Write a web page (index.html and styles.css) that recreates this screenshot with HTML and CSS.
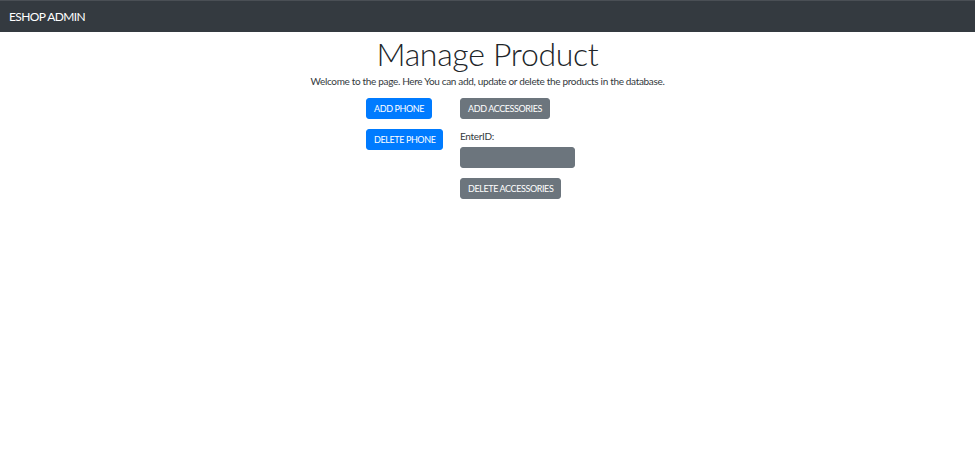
FILE: index.html
```html
<!DOCTYPE html>
<html>
<head>
<meta charset="utf-8">
<link rel="stylesheet" href="styles.css">
</head>
<body>
<nav class="navbar"><span class="brand">ESHOP ADMIN</span></nav>
<main class="main">
  <h1 class="title">Manage Product</h1>
  <p class="lead">Welcome to the page. Here You can add, update or delete the products in the database.</p>
  <div class="row">
    <div class="col col-left">
      <button class="btn btn-primary">ADD PHONE</button>
      <button class="btn btn-primary">DELETE PHONE</button>
    </div>
    <div class="col col-right">
      <button class="btn btn-secondary">ADD ACCESSORIES</button>
      <label class="label">EnterID:</label>
      <input class="input" type="text">
      <button class="btn btn-secondary btn-last">DELETE ACCESSORIES</button>
    </div>
  </div>
</main>
</body>
</html>
```
FILE: styles.css
```css
* { box-sizing: border-box; }
body {
  margin: 0;
  font-family: Lato, "Open Sans", sans-serif;
  color: #212529;
  background: #fff;
}
.navbar {
  height: 32px;
  background: #343a40;
  border-top: 1px solid #4a4f55;
  display: flex;
  align-items: center;
  padding-left: 9px;
}
.brand {
  color: #fff;
  font-size: 12px;
  letter-spacing: -0.6px;
}
.main {
  display: flex;
  flex-direction: column;
  align-items: center;
}
.title {
  margin: 2px 0 0;
  font-weight: 300;
  font-size: 32px;
  line-height: 40px;
  letter-spacing: -0.3px;
  color: #212529;
}
.lead {
  margin: 0 0 10px;
  font-size: 10px;
  line-height: 14px;
  letter-spacing: -0.33px;
  color: #343a40;
}
.row {
  display: flex;
}
.col {
  display: flex;
  flex-direction: column;
  align-items: flex-start;
}
.col-left { width: 94px; gap: 10px; }
.col-right { width: 149px; }
.btn {
  border: 1px solid transparent;
  border-radius: 3px;
  color: #fff;
  font-family: inherit;
  font-size: 9px;
  letter-spacing: -0.4px;
  height: 21px;
  padding: 0 7px;
  line-height: 19px;
}
.btn-primary { background: #007bff; border-color: #007bff; }
.btn-secondary { background: #6c757d; border-color: #6c757d; }
.label {
  margin-top: 10px;
  font-size: 10px;
  letter-spacing: -0.3px;
  line-height: 14px;
  color: #343a40;
}
.input {
  margin-top: 4px;
  width: 115px;
  height: 21px;
  background: #6c757d;
  border: 1px solid #6c757d;
  border-radius: 3px;
}
.btn-last { margin-top: 10px; }
```
